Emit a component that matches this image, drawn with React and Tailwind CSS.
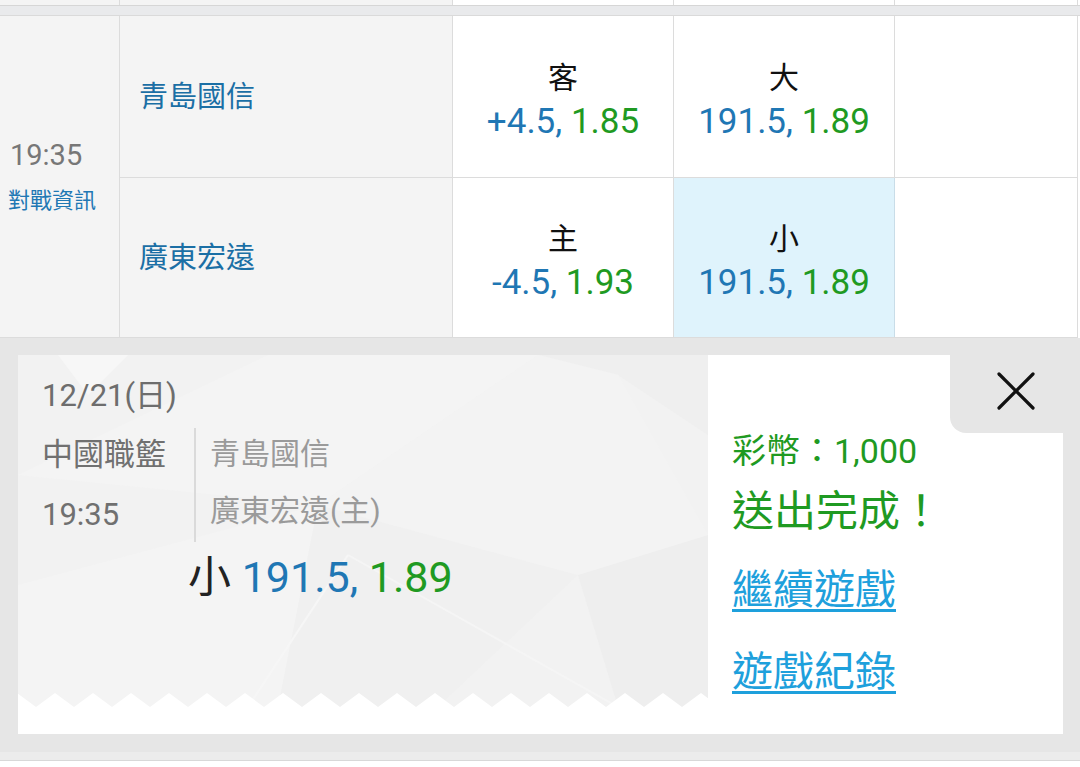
export default function App() {
  const zig = [];
  for (let k = -1; k < 20; k++) {
    zig.push(`${18 + 38 * k},14`);
    zig.push(`${37 + 38 * k},0`);
  }
  const zigPts = zig.join(" ") + " 800,14 -40,14";

  const Odds = ({ label, a, b }) => (
    <div className="flex flex-col items-center justify-center h-full pt-[7px]">
      <div className="text-[30px] leading-[44px] text-[#111]">{label}</div>
      <div className="text-[35px] leading-[44px] whitespace-nowrap">
        <span className="text-[#1f77b4]">{a}</span>{" "}
        <span className="text-[#1f9a22]">{b}</span>
      </div>
    </div>
  );

  return (
    <div className="w-[1080px] h-[767px] overflow-hidden bg-white font-['Roboto','Noto_Sans_CJK_TC',sans-serif]">
      {/* previous row remnant */}
      <div className="flex h-[6px] border-b border-[#d6d6d6]">
        <div className="w-[120px] bg-[#f4f4f4] border-r border-[#dcdcdc]" />
        <div className="w-[333px] bg-[#f4f4f4] border-r border-[#dcdcdc]" />
        <div className="w-[221px] bg-white border-r border-[#dcdcdc]" />
        <div className="w-[221px] bg-white border-r border-[#dcdcdc]" />
        <div className="w-[183px] bg-white border-r border-[#dcdcdc]" />
      </div>
      <div className="h-[10px] bg-[#e9eaec] border-b border-[#dadada]" />

      {/* match row */}
      <div className="flex">
        <div className="w-[120px] h-[322px] bg-[#f4f4f4] border-r border-b border-[#dcdcdc] flex flex-col justify-center pt-[3px]">
          <div className="pl-[10px] text-[29px] leading-[46px] text-[#777]">19:35</div>
          <div className="pl-[8px] text-[22px] leading-[46px] text-[#1f78b4]">對戰資訊</div>
        </div>
        <div className="flex flex-col">
          <div className="flex h-[162px] border-b border-[#dcdcdc]">
            <div className="w-[333px] bg-[#f4f4f4] border-r border-[#dcdcdc] flex items-center pl-[19px] pt-[3px] text-[29px] text-[#1b6fa5]">
              青島國信
            </div>
            <div className="w-[221px] border-r border-[#dcdcdc]">
              <Odds label="客" a="+4.5," b="1.85" />
            </div>
            <div className="w-[221px] border-r border-[#dcdcdc]">
              <Odds label="大" a="191.5," b="1.89" />
            </div>
            <div className="w-[183px] border-r border-[#dcdcdc]" />
          </div>
          <div className="flex h-[160px] border-b border-[#dcdcdc]">
            <div className="w-[333px] bg-[#f4f4f4] border-r border-[#dcdcdc] flex items-center pl-[19px] pt-[3px] text-[29px] text-[#1b6fa5]">
              廣東宏遠
            </div>
            <div className="w-[221px] border-r border-[#dcdcdc]">
              <Odds label="主" a="-4.5," b="1.93" />
            </div>
            <div className="w-[221px] border-r border-[#c9dde8] bg-[#dff3fc]">
              <Odds label="小" a="191.5," b="1.89" />
            </div>
            <div className="w-[183px] border-r border-[#dcdcdc]" />
          </div>
        </div>
      </div>

      {/* bet confirmation */}
      <div className="bg-[#e6e6e6] pt-[17px] pb-[18px] pl-[18px] pr-[17px]">
        <div className="flex h-[379px] bg-white">
          <div className="w-[690px] flex flex-col">
            <div className="relative h-[352px] bg-[#f2f2f2] overflow-hidden">
              <svg className="absolute inset-0" width="690" height="352" viewBox="0 0 690 352">
                <polygon points="40,0 110,0 70,40" fill="#f7f7f7" />
                <polygon points="0,120 250,0 520,0 300,150" fill="#f4f4f4" />
                <polygon points="520,0 690,0 690,80 600,20" fill="#efefef" />
                <polygon points="0,230 300,150 260,352 0,352" fill="#f4f4f4" />
                <polygon points="300,150 560,220 420,352 260,352" fill="#f0f0f0" />
                <polygon points="560,220 690,180 690,352 600,352" fill="#eeeeee" />
                <polygon points="520,0 600,20 690,180 560,220 300,150" fill="#f3f3f3" />
                <line x1="230" y1="352" x2="330" y2="200" stroke="#f6f6f6" strokeWidth="2" />
                <line x1="330" y1="200" x2="600" y2="352" stroke="#f5f5f5" strokeWidth="2" />
              </svg>
              <svg className="absolute left-0 bottom-0" width="690" height="14" viewBox="0 0 690 14">
                <polygon points={zigPts} fill="#ffffff" />
              </svg>
              <div className="relative pl-[24px] pt-[21px]">
                <div className="text-[31px] leading-[40px] text-[#6d6d6d]">12/21(日)</div>
                <div className="flex mt-[9px]">
                  <div className="w-[152px] text-[31px] leading-[60px] text-[#707070]">
                    <div>中國職籃</div>
                    <div>19:35</div>
                  </div>
                  <div className="w-[2px] bg-[#dadada] my-[3px]" />
                  <div className="pl-[14px] text-[30px] leading-[57px] text-[#9a9a9a]">
                    <div>青島國信</div>
                    <div>廣東宏遠(主)</div>
                  </div>
                </div>
                <div className="ml-[146px] mt-[7px] text-[43px] leading-[50px] whitespace-nowrap">
                  <span className="text-[#222]">小</span>{" "}
                  <span className="text-[#1f77b4]">191.5,</span>{" "}
                  <span className="text-[#1f9a22]">1.89</span>
                </div>
              </div>
            </div>
            <div className="flex-1 bg-white" />
          </div>
          <div className="relative flex-1 bg-white pl-[24px] pt-[76px]">
            <div className="absolute top-0 right-0 w-[113px] h-[78px] bg-[#e6e6e6] rounded-bl-[16px] pl-[47px] pt-[17px]">
              <svg width="38" height="38" viewBox="0 0 38 38">
                <line x1="2" y1="2" x2="36" y2="36" stroke="#111" strokeWidth="3.2" strokeLinecap="round" />
                <line x1="36" y1="2" x2="2" y2="36" stroke="#111" strokeWidth="3.2" strokeLinecap="round" />
              </svg>
            </div>
            <div className="text-[34px] leading-[40px] text-[#1f9a22] whitespace-nowrap">彩幣：1,000</div>
            <div className="mt-[16px] text-[42px] leading-[50px] text-[#1f9a22] whitespace-nowrap">送出完成！</div>
            <div className="mt-[29px] text-[41px] leading-[48px]">
              <span className="text-[#1ea0dc] underline decoration-[3px] underline-offset-[5px]">繼續遊戲</span>
            </div>
            <div className="mt-[34px] text-[41px] leading-[48px]">
              <span className="text-[#1ea0dc] underline decoration-[3px] underline-offset-[5px]">遊戲紀錄</span>
            </div>
          </div>
        </div>
      </div>
      <div className="h-[9px] bg-[#ececec] border-b border-[#d8d8d8]" />
    </div>
  );
}
